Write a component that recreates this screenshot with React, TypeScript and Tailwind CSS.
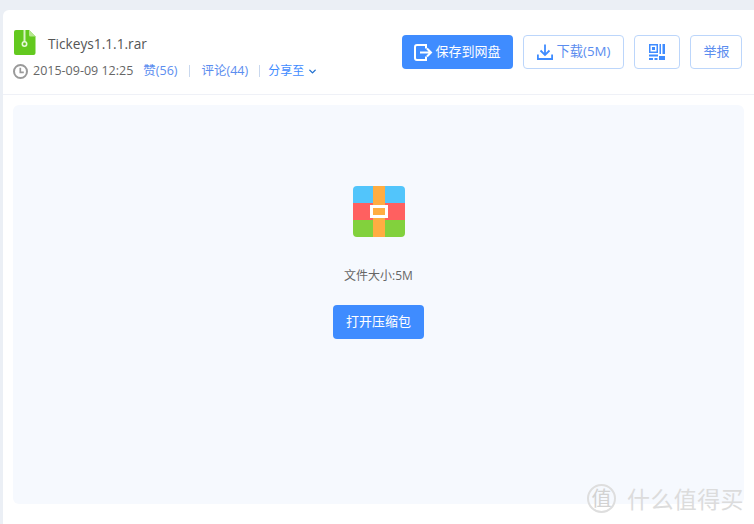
import { ChevronDown } from 'lucide-react';

const cjk = '"Open Sans", "Noto Sans CJK SC", sans-serif';

function FileIcon() {
  return (
    <svg width="22" height="25" viewBox="0 0 22 25">
      <path d="M2 0H15L21.5 6.5V23a2 2 0 0 1-2 2H2a2 2 0 0 1-2-2V2a2 2 0 0 1 2-2Z" fill="#63c91f" />
      <path d="M15 0L21.5 6.5H16.5a1.5 1.5 0 0 1-1.5-1.5Z" fill="#b6e88f" />
      <rect x="9.5" y="0" width="2" height="12" fill="#d8f3c4" />
      <circle cx="10.5" cy="14" r="2.2" fill="none" stroke="#e6f8d8" strokeWidth="1.6" />
    </svg>
  );
}

function ClockIcon() {
  return (
    <svg width="15" height="15" viewBox="0 0 15 15" fill="none" stroke="#9a9a9a">
      <circle cx="7.5" cy="7.5" r="6.5" strokeWidth="2" />
      <path d="M7.3 3.8V8.4H10.8" strokeWidth="1.7" />
    </svg>
  );
}

function SaveIcon() {
  return (
    <svg width="19" height="17" viewBox="0 0 19 17" fill="none" stroke="#fff" strokeWidth="2">
      <path d="M12 4.5V1H3a2 2 0 0 0-2 2V14a2 2 0 0 0 2 2H12V12.5" />
      <path d="M6 8.5H17M13 4.5L17 8.5L13 12.5" />
    </svg>
  );
}

function DownloadIcon() {
  return (
    <svg width="16" height="16" viewBox="0 0 16 16" fill="none" stroke="#3f8cff" strokeWidth="1.8">
      <path d="M8 0.5V11M3.5 6.5L8 11L12.5 6.5" />
      <path d="M0.9 10.5V15H15.1V10.5" />
    </svg>
  );
}

function QrIcon() {
  return (
    <svg width="16" height="16" viewBox="0 0 16 16" fill="#3f8cff">
      <path d="M0 0H9V9H0ZM1.5 1.5V7.5H7.5V1.5Z" fillRule="evenodd" />
      <rect x="3" y="3" width="3" height="3" />
      <rect x="10.5" y="0" width="1.5" height="10" />
      <rect x="13.5" y="0" width="2.5" height="10" />
      <rect x="0" y="10.5" width="9" height="2" />
      <rect x="0" y="14" width="4" height="2" />
      <rect x="5.5" y="14" width="3" height="2" />
      <rect x="10" y="12" width="6" height="4" />
    </svg>
  );
}

function RarIcon() {
  return (
    <svg width="52" height="51" viewBox="0 0 52 51">
      <defs>
        <clipPath id="box">
          <rect width="52" height="51" rx="4" />
        </clipPath>
      </defs>
      <g clipPath="url(#box)">
        <rect width="52" height="17" fill="#52c5fb" />
        <rect y="17" width="52" height="17" fill="#ff6060" />
        <rect y="34" width="52" height="17" fill="#82d13d" />
        <rect x="20" width="12" height="51" fill="#ffad42" />
        <rect x="17" y="19" width="18" height="13" fill="#fff" />
        <rect x="20" y="22" width="12" height="7" fill="#ffad42" />
      </g>
    </svg>
  );
}

function Divider() {
  return <span className="block h-[12px] w-px bg-[#c9d8ee]" />;
}

export default function App() {
  return (
    <div
      className="relative h-[524px] w-[754px] overflow-hidden bg-[#ebeff5] pl-[3px] pt-[10px]"
      style={{ fontFamily: cjk }}
    >
      <div className="h-full rounded-tl-[6px] bg-white">
        <div className="flex h-[85px] items-start justify-between border-b border-[#eff1f7] pl-[11px] pr-[12px]">
          <div className="pt-[20px]">
            <div className="flex items-center gap-[13px]">
              <FileIcon />
              <span className="-ml-px mt-[2px] text-[13.7px] leading-[20px] text-[#555]">Tickeys1.1.1.rar</span>
            </div>
            <div className="-ml-px mt-[8px] flex items-center text-[12.5px] leading-[16px]">
              <ClockIcon />
              <span className="ml-[5px] text-[#666]">2015-09-09 12:25</span>
              <span className="ml-[10px] text-[#5b8def]">赞(56)</span>
              <span className="ml-[11px] mr-[12px]"><Divider /></span>
              <span className="text-[#5b8def]">评论(44)</span>
              <span className="ml-[11px] mr-[8px]"><Divider /></span>
              <span className="text-[12px] text-[#3f8cff]">分享至</span>
              <ChevronDown className="ml-[3px] text-[#1f6fd0]" size={11} strokeWidth={3} />
            </div>
          </div>
          <div className="flex gap-[10px] pt-[25px]">
            <button className="flex h-[34px] w-[111px] items-center justify-center gap-[2px] rounded-[4px] bg-[#3f8cff] text-[13px] text-white">
              <SaveIcon />
              保存到网盘
            </button>
            <button className="flex h-[34px] w-[101px] items-center justify-center gap-[4px] rounded-[4px] border border-[#bcd6fb] text-[13.3px] text-[#5b8def]">
              <DownloadIcon />
              下载(5M)
            </button>
            <button className="flex h-[34px] w-[46px] items-center justify-center rounded-[4px] border border-[#bcd6fb]">
              <QrIcon />
            </button>
            <button className="flex h-[34px] w-[52px] items-center justify-center rounded-[4px] border border-[#bcd6fb] pl-px text-[13px] text-[#5b8def]">
              举报
            </button>
          </div>
        </div>
        <div className="mx-[10px] mt-[10px] flex h-[399px] flex-col items-center rounded-[6px] bg-[#f6f9fe] pt-[81px]">
          <RarIcon />
          <div className="mt-[31px] text-[12px] leading-[16px] text-[#666]">文件大小:5M</div>
          <button className="mt-[21px] h-[34px] w-[91px] rounded-[4px] bg-[#3f8cff] text-[13px] text-white">
            打开压缩包
          </button>
        </div>
      </div>
      <div className="absolute left-[587px] top-[484px] flex items-center gap-[11px]">
        <span className="flex h-[29px] w-[29px] items-center justify-center rounded-full border-2 border-[#dedede] text-[20px] leading-none text-[#d2d2d2]">
          值
        </span>
        <span className="text-[23px] leading-[28px] tracking-[0.4px] text-[#dcdcdc]">什么值得买</span>
      </div>
    </div>
  );
}
